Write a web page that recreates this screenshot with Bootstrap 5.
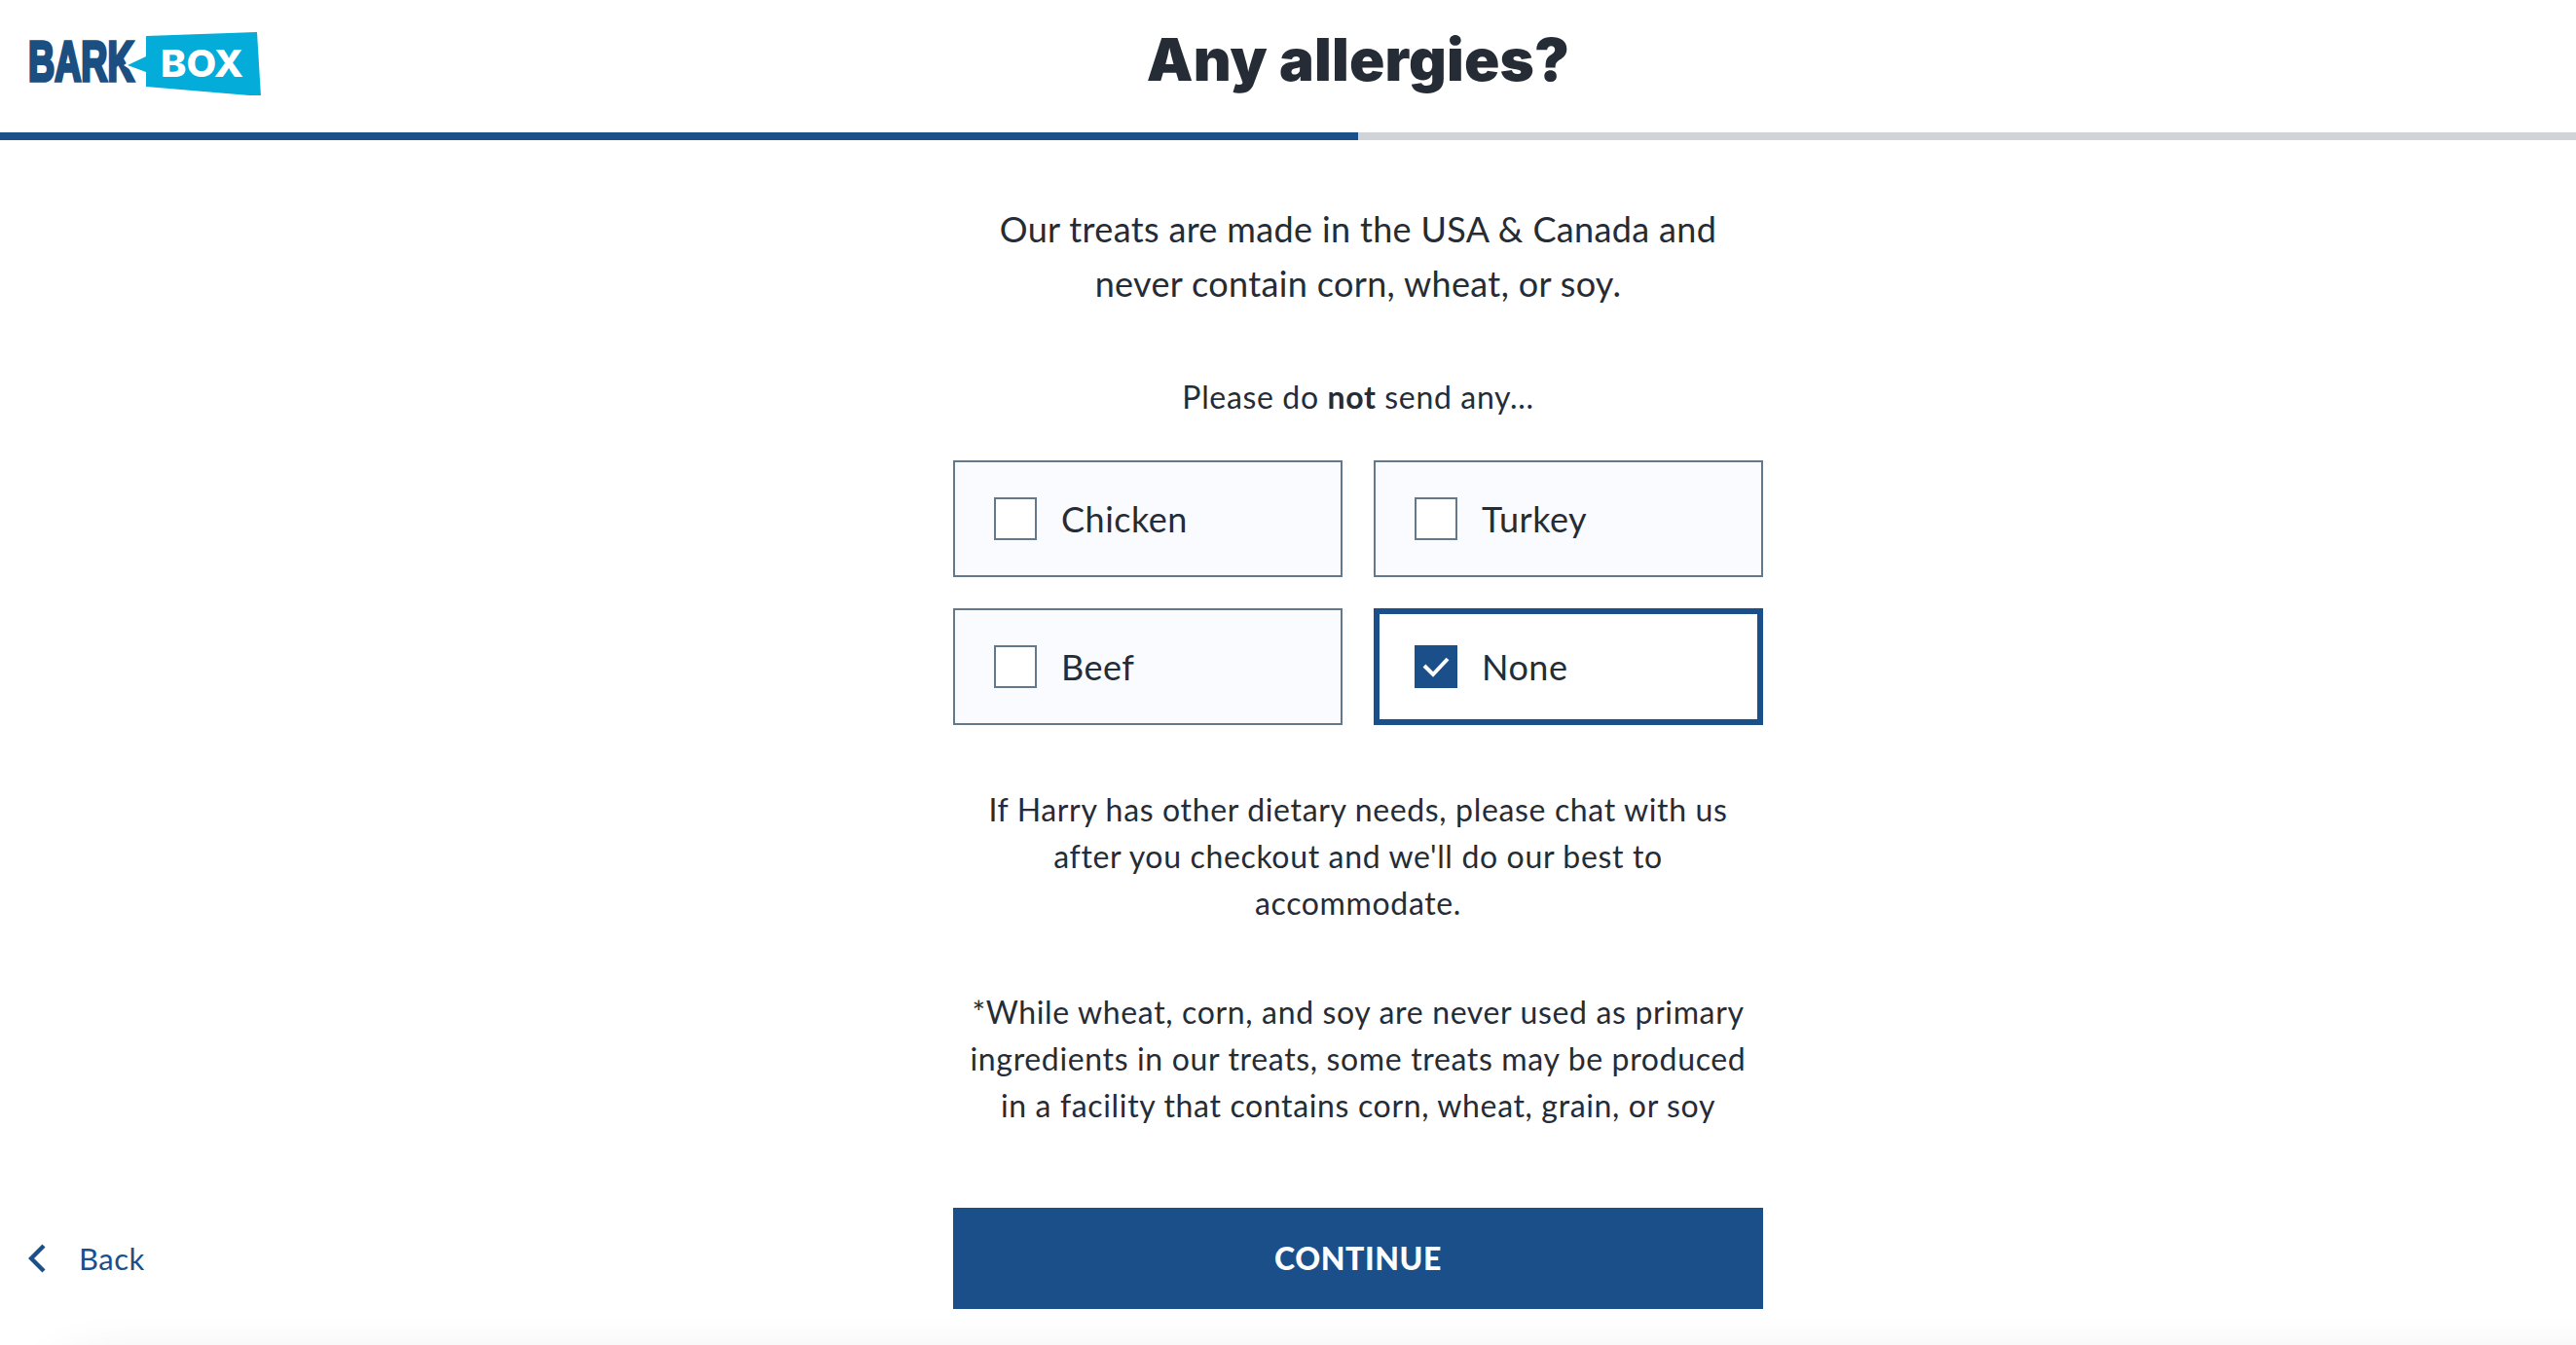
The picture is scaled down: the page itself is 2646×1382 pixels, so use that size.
<!DOCTYPE html>
<html lang="en">
<head>
<meta charset="utf-8">
<title>Any allergies?</title>
<link href="https://cdn.jsdelivr.net/npm/bootstrap@5.3.0/dist/css/bootstrap.min.css" rel="stylesheet">
<style>
html,body{height:100%;}
body{font-family:"Lato","Noto Sans",sans-serif;color:#252c35;background:#fff;overflow:hidden;}
.shell{height:1382px;position:relative;overflow:hidden;}
.track3{display:grid;grid-template-columns:979px 832px 1fr;}
.topbar{height:136px;align-items:center;}
.logo-svg{display:block;margin-left:26px;margin-top:-10px;width:244px;height:70px;}
.logo-bark{font-family:"Liberation Sans",sans-serif;font-weight:700;fill:#1b4f82;stroke:#1b4f82;stroke-width:3.5px;}
.logo-box{font-family:"Inter","Liberation Sans",sans-serif;font-weight:800;fill:#fff;}
.page-title{font-family:"Inter",sans-serif;font-weight:900;font-size:60px;line-height:1;color:#252c35;margin:0 0 14px;letter-spacing:.2px;}
.prog{height:8px;background:#d0d3d8;}
.prog-fill{height:100%;background:#1b4f8a;}
.intro{font-size:36px;line-height:56px;margin:63px 0 0;letter-spacing:.35px;}
.lead-in{font-size:32px;line-height:48px;margin:65px 0 0;letter-spacing:.65px;}
.choices{display:grid;grid-template-columns:400px 400px;gap:32px;margin-top:41px;}
.choice{height:120px;border:2px solid #64788c;background:#fafbff;display:flex;align-items:center;padding-left:40px;gap:25px;font-size:36px;line-height:1.4;color:#252c35;letter-spacing:.5px;}
.choice.picked{border:6px solid #1b4f8a;background:#fff;padding-left:36px;}
.tick{width:44px;height:44px;flex:none;border:2px solid #64788c;background:#fff;display:flex;align-items:center;justify-content:center;}
.picked .tick{background:#1b4f8a;border-color:#1b4f8a;}
.note{font-size:32px;line-height:48px;margin:63px 0 0;letter-spacing:.65px;}
.note + .note{margin-top:64px;}
.foot-row{position:absolute;left:0;right:0;top:1241px;align-items:center;}
.back-link{display:flex;align-items:center;gap:34px;margin-left:29px;color:#1b4f8a;font-size:31px;text-decoration:none;letter-spacing:.5px;}
.go-btn{height:104px;border-radius:0;background:#1b4f8a;border:0;color:#fff;font-family:"Lato",sans-serif;font-weight:900;font-size:32px;letter-spacing:.6px;width:100%;}
.go-btn:hover{background:#1b4f8a;color:#fff;}
.fade-edge{position:absolute;left:50px;right:-200px;top:1408px;height:100px;box-shadow:0 0 60px rgba(0,0,0,.14);border-radius:70px;}
</style>
</head>
<body>
<div class="shell">
  <header class="track3 topbar">
    <div>
      <svg class="logo-svg" viewBox="26 26 244 70" role="img" aria-label="BarkBox">
        <text class="logo-bark" transform="translate(29 81) scale(.66 1)" font-size="57">BARK</text>
        <polygon points="127,65 152,48 152,82" fill="#fff"/>
        <polygon points="150,35 264,31 268,97 150,87 150,72 131,65 150,56" fill="#03acd9"/>
        <text class="logo-box" x="165" y="77" font-size="38" textLength="85" lengthAdjust="spacingAndGlyphs">BOX</text>
      </svg>
    </div>
    <h1 class="page-title text-center">Any allergies?</h1>
    <div></div>
  </header>
  <div class="prog"><div class="prog-fill" style="width:52.72%"></div></div>
  <main class="track3">
    <div></div>
    <div class="text-center">
      <p class="intro">Our treats are made in the USA &amp; Canada and<br>never contain corn, wheat, or soy.</p>
      <p class="lead-in">Please do <b>not</b> send any...</p>
      <div class="choices text-start">
        <label class="choice"><span class="tick"></span>Chicken</label>
        <label class="choice"><span class="tick"></span>Turkey</label>
        <label class="choice"><span class="tick"></span>Beef</label>
        <label class="choice picked"><span class="tick"><svg width="28" height="22" viewBox="0 0 28 22"><path d="M2 10l9 9L26 3" fill="none" stroke="#fff" stroke-width="4"/></svg></span>None</label>
      </div>
      <p class="note">If Harry has other dietary needs, please chat with us<br>after you checkout and we'll do our best to<br>accommodate.</p>
      <p class="note">*While wheat, corn, and soy are never used as primary<br>ingredients in our treats, some treats may be produced<br>in a facility that contains corn, wheat, grain, or soy</p>
    </div>
    <div></div>
  </main>
  <div class="track3 foot-row">
    <a class="back-link" href="#"><svg width="18" height="30" viewBox="0 0 18 30"><path d="M16 2L3 15l13 13" fill="none" stroke="#1b4f8a" stroke-width="4.4"/></svg>Back</a>
    <button class="btn go-btn" type="button">CONTINUE</button>
    <div></div>
  </div>
  <div class="fade-edge"></div>
</div>
<script src="https://cdn.jsdelivr.net/npm/bootstrap@5.3.0/dist/js/bootstrap.bundle.min.js"></script>
</body>
</html>
